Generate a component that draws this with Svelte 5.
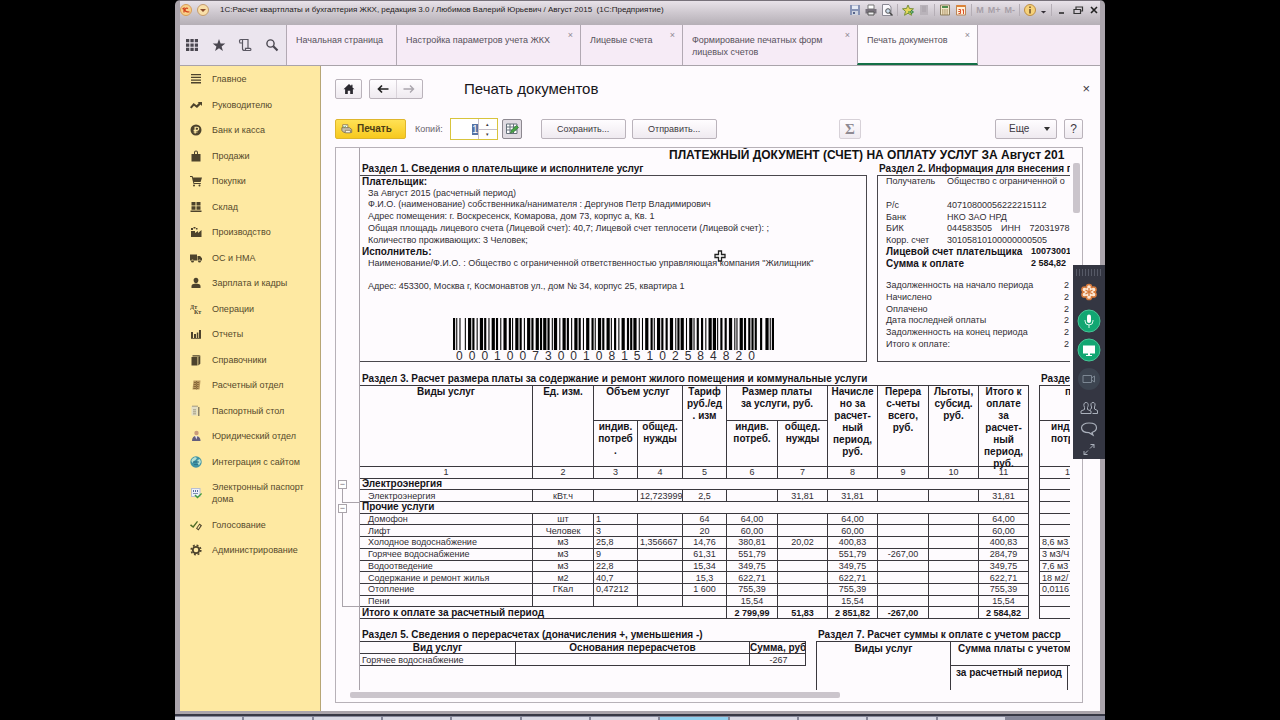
<script>
  import { onMount } from "svelte";

  let copies = "1";
  let copiesInput;

  onMount(() => {
    copiesInput.focus();
    copiesInput.select();
  });

  const tabs = [
    { title: "Начальная страница", kind: "home" },
    { title: "Настройка параметров учета ЖКХ", kind: "params", close: true },
    { title: "Лицевые счета", kind: "accounts", close: true },
    { title: "Формирование печатных форм лицевых счетов", kind: "forms", close: true },
    { title: "Печать документов", kind: "documents", close: true, active: true },
  ];

  const dark = "#4d432c";
  const sections = [
    { title: "Главное", paths: [[dark, "M1 1h10v1.3H1zM1 3.7h10V5H1zM1 6.4h10v1.3H1zM1 9.1h10v1.3H1z"]] },
    { title: "Руководителю", paths: [[dark, "M0 8.3 3.6 4l3 2.2L8.8 4 7.6 3H12v4L10.600 5.600 7 9 4 6.800 1.500 9.600z"]] },
    { title: "Банк и касса", paths: [[dark, "M6 .5a5.500 5.500 0 1 0 0 11 5.500 5.500 0 0 0 0-11zM4.500 2.700h2.700a2 2 0 0 1 0 4.200H5.800v.7h1.700v.9H5.800v1H4.500v-1h-.9v-.9h.9V6.900h-.9V5.800h.9zm1.300 1.100v2h1.300a1 1 0 0 0 0-2z"]] },
    { title: "Продажи", paths: [[dark, "M1.500 4H4V2.500a2 2 0 0 1 4 0V4h2.500v7.500h-9zM5 4h2V2.600a1 1 0 0 0-2 0z"]] },
    { title: "Покупки", paths: [[dark, "M0 1h2.500l.5 1.500h9L10.600 7H4l.3 1h6.500v1H3.500L1.800 2H0zM4 9.500a1 1 0 1 1 0 2 1 1 0 0 1 0-2zM9.500 9.500a1 1 0 1 1 0 2 1 1 0 0 1 0-2z"]] },
    { title: "Склад", paths: [[dark, "M1.500 1h4v3.500h-4zM6.500 1h4v3.500h-4zM1.500 5.300h4v3.500h-4zM6.500 5.300h4v3.500h-4zM.5 9.600h11V11H.5z"]] },
    { title: "Производство", paths: [[dark, "M1 11V5h4v2l3-2v2l3.500-3v7zM1 2h2v2H1zM3.500 1h2v1.500h-2zM6 2h1.500v1.500H6z"]] },
    { title: "ОС и НМА", paths: [[dark, "M0 2.500h7V8.500H0zM7.500 4h2.600L12 6.200v2.300H7.500zM2.500 7.500a1.500 1.500 0 1 1 0 3 1.500 1.500 0 0 1 0-3zM9.500 7.500a1.500 1.500 0 1 1 0 3 1.500 1.500 0 0 1 0-3z"]] },
    { title: "Зарплата и кадры", paths: [[dark, "M6 .8c1.600 0 2.400 1.100 2.400 2.500C8.400 4.800 7.500 6.200 6 6.200S3.600 4.800 3.600 3.300C3.600 1.900 4.400.8 6 .8zM1.500 11V9c0-1.500 2-2.200 3-2.200h3c1 0 3 .7 3 2.200v2z"]] },
    { title: "Операции", letters: true },
    { title: "Отчеты", paths: [[dark, "M1 4h2v6H1zM4 6h2v4H4zM6.800 4.500h1.500V10H6.800zM9 2h2v8H9zM1 10.300h10v.8H1z"]] },
    { title: "Справочники", paths: [[dark, "M1.500 3h6v8.500h-6zM2.500 1.300h8L8.500 2.500h-6zM8.300 3l2-1.200v8l-2 1.700z"]] },
    { title: "Расчетный отдел", paths: [["#b9975e", "M3.500 1.500h7L9.500 10.500h-7z"], ["#77592e", "M4 3h5v.8H4zM3.800 5h5v.8h-5zM3.600 7h5v.8h-5zM3.400 9h5v.8h-5zM6 2h.7v8.500H6z"]] },
    { title: "Паспортный стол", paths: [["#e3dfc6", "M1.500 1h6v9.500h-6z"], ["#8b8268", "M8 2h1.500v9H8zM3 4.500h3v.7H3zM3 6.500h3v.7H3zM3 8.500h3v.7H3zM2 .8h6v.6H2z"]] },
    { title: "Юридический отдел", paths: [["#c99b7b", "M6.500.8a2.200 2.200 0 1 1 0 4.400 2.200 2.200 0 0 1 0-4.400z"], ["#625d7d", "M2 11c0-3.500 1.500-5 4-5s4.500 1.500 4.500 5z"], ["#e5dfec", "M5 6h2.500L6.400 9.500z"]] },
    { title: "Интеграция с сайтом", paths: [["#3f93a5", "M6 .3a5.700 5.700 0 1 0 0 11.400A5.700 5.700 0 0 0 6 .3z"], ["#b4dfd2", "M2 3l3-2 2 1-1.500 2L4 5 2.500 7 1.300 5zM7.500 4l2.500-1 1 3-2 3.500L7.500 7z"], ["#286c84", "M3 5.500h6v1H3zM4 8h4v.8H4z"]] },
    { title: "Электронный паспорт дома", paths: [["#b9bfd2", "M1 1h9.500v9H1z"], ["#edf1fa", "M2 2h7.500v7H2z"], ["#5b6f9e", "M3 3h1v2H3zM5 3h1v2H5zM7 3h1v2H7zM3 6h5v.8H3z"], ["#3f9a3d", "M4.500 8.500l1-1 2 2L11.200 6l.8 1-4.500 4.500z"]] },
    { title: "Голосование", paths: [["#4d6b25", "M0 6.500l1-1.200 2 1.700 4-5 1 .8L3.300 9z"], ["#4d432c", "M6 9.500l3.500-5 2.500 2-3.500 5zM7.300 9.300l1 .8 2.200-3.300-1-.8z"]] },
    { title: "Администрирование", gear: true },
  ];

  const services = [
    { group: "Электроэнергия" },
    { cells: ["Электроэнергия", "кВт.ч", "", "12,723999", "2,5", "", "31,81", "31,81", "", "", "31,81"] },
    { group: "Прочие услуги" },
    { cells: ["Домофон", "шт", "1", "", "64", "64,00", "", "64,00", "", "", "64,00"] },
    { cells: ["Лифт", "Человек", "3", "", "20", "60,00", "", "60,00", "", "", "60,00"] },
    { cells: ["Холодное водоснабжение", "м3", "25,8", "1,356667", "14,76", "380,81", "20,02", "400,83", "", "", "400,83"] },
    { cells: ["Горячее водоснабжение", "м3", "9", "", "61,31", "551,79", "", "551,79", "-267,00", "", "284,79"] },
    { cells: ["Водоотведение", "м3", "22,8", "", "15,34", "349,75", "", "349,75", "", "", "349,75"] },
    { cells: ["Содержание и ремонт жилья", "м2", "40,7", "", "15,3", "622,71", "", "622,71", "", "", "622,71"] },
    { cells: ["Отопление", "ГКал", "0,47212", "", "1 600", "755,39", "", "755,39", "", "", "755,39"] },
    { cells: ["Пени", "", "", "", "", "15,54", "", "15,54", "", "", "15,54"] },
  ];

  const norms = ["", "", "", "", "", "8,6 м3", "3 м3/Ч", "7,6 м3", "18 м2/", "0,0116", "", ""];

  const debts = [
    "Задолженность на начало периода",
    "Начислено",
    "Оплачено",
    "Дата последней оплаты",
    "Задолженность на конец периода",
    "Итого к оплате:",
  ];

  // Code 128, set B: widths of bars and spaces for each digit
  const digitPatterns = [
    "123122", "123221", "223211", "221132", "221231",
    "213212", "223112", "312131", "311222", "321122",
  ];
  const receiptCode = "000100730010815102584820";

  function barcodeBars(code) {
    const widths = "211214" + [...code].map((d) => digitPatterns[d]).join("") + "212123" + "2331112";
    const bars = [];
    let x = 0;
    [...widths].forEach((w, i) => {
      if (i % 2 === 0) bars.push({ x, width: Number(w) });
      x += Number(w);
    });
    return bars;
  }

  const bars = barcodeBars(receiptCode);
</script>

<div class="desktop">
  <div class="window">
    <header class="titlebar">
      <svg class="round-icon" viewBox="0 0 12 12">
        <circle cx="6" cy="6" r="5.500" fill="#f8d089" stroke="#d79c58" />
        <path d="M2.500 5 4 4v4.500M8 4.500C6.500 3.500 5 4.500 5 6s1.500 2 4.500 2" fill="none" stroke="#d1401c" stroke-width="1.200" />
      </svg>
      <svg class="round-icon" viewBox="0 0 12 12">
        <circle cx="6" cy="6" r="5.500" fill="#f9dfa8" stroke="#c39a6d" />
        <path d="M3 5h6L6 8z" fill="#8a4b2c" />
      </svg>
      <span class="app-title">1С:Расчет квартплаты и бухгалтерия ЖКХ, редакция 3.0 / Любимов Валерий Юрьевич / Август 2015&nbsp; (1С:Предприятие)</span>
      <div class="title-tools">
        <svg viewBox="0 0 12 12"><path d="M1 1h10v10H1z" fill="#8793b5" /><path d="M3 1.500h6V5H3z" fill="#e6ebf5" /><path d="M3 7h6v4H3z" fill="#cfd4df" /><path d="M4 8h2v2H4z" fill="#58648a" /></svg>
        <svg viewBox="0 0 12 12"><path d="M3 1h6v4H3z" fill="#fff" stroke="#777" /><path d="M.5 5h11v4.500H.5z" fill="#77717b" /><path d="M3 8h6v3H3z" fill="#eee" stroke="#555" /></svg>
        <svg viewBox="0 0 12 12"><path d="M1.500.5H8L10 3v8.500H1.500z" fill="#faf8fc" stroke="#8b8994" /><circle cx="7" cy="7" r="2.300" fill="#cde" stroke="#555" /><path d="m8.500 8.500 3 3" stroke="#444" stroke-width="1.500" /></svg>
        <i></i>
        <svg viewBox="0 0 12 12"><path d="m6 1 1.500 3.500 4 .3-3 2.500 1 4L6 9.200l-3.500 2.100 1-4-3-2.500 4-.3z" fill="#e5d75a" stroke="#79913c" /><path d="M6 8h5M9 6l2.500 2L9 10" stroke="#2d8b3d" fill="none" /></svg>
        <svg viewBox="0 0 12 12"><path d="M2 1h8v10H2z" fill="#b9b3ba" /><path d="M4 3h4M4 5h4M4 7h4" stroke="#a7a0a8" /></svg>
        <i></i>
        <svg viewBox="0 0 12 12"><path d="M1.500 1h9v10h-9z" fill="#f2e7c8" stroke="#8c7f5e" /><path d="M3 3h6" stroke="#4e8c4c" stroke-width="2" /><path d="M3 6h6M3 8h6M3 10h6" stroke="#99794b" stroke-dasharray="1.500 .7" /></svg>
        <svg viewBox="0 0 12 12"><path d="M1.500 1.500h9v9.500h-9z" fill="#fff0d9" stroke="#b98759" /><path d="M1.500 2h9" stroke="#db8238" stroke-width="2" /><path d="M3.500 5.500h2v2h-2 2v2h-2M7 6l1.500-.5v4.500" stroke="#dc4e27" fill="none" /></svg>
        <i></i>
        <span class="memory">M</span>
        <span class="memory">M+</span>
        <span class="memory">M-</span>
        <i></i>
        <svg viewBox="0 0 12 12"><circle cx="6" cy="6" r="5.500" fill="#f6d27a" stroke="#bd8d44" /><path d="M6 2.500v1.500M6 5v4.500" stroke="#6d4f2b" stroke-width="1.500" /></svg>
        <svg class="small" viewBox="0 0 8 12"><path d="M1 7h6L4 10z" fill="#332f36" /></svg>
        <i></i>
        <svg viewBox="0 0 12 12"><path d="M3 9h5" stroke="#222" stroke-width="1.500" /></svg>
        <svg viewBox="0 0 12 12"><path d="M4 5V3h6.500v4H8.500M2 5.500h6.500V9.500H2z" fill="none" stroke="#333" stroke-width="1.200" /></svg>
        <svg viewBox="0 0 12 12"><path d="m3 3 6 6M9 3 3 9" stroke="#222" stroke-width="1.600" /></svg>
      </div>
    </header>

    <nav class="tabs">
      <div class="quick">
        <svg viewBox="0 0 14 14"><path d="M1 1h3.300v3.300H1zM5.400 1h3.300v3.300H5.400zM9.800 1H13v3.300H9.800zM1 5.400h3.300v3.300H1zM5.400 5.400h3.300v3.300H5.400zM9.800 5.400H13v3.300H9.800zM1 9.800h3.300V13H1zM5.400 9.800h3.300V13H5.400zM9.800 9.800H13V13H9.800z" fill="#4a4750" /></svg>
        <svg viewBox="0 0 14 14"><path d="m7 1 1.600 4.400 4.700.1-3.700 2.900 1.300 4.500L7 10.300l-3.900 2.600 1.300-4.500L.7 5.500l4.700-.1z" fill="#4a4750" /></svg>
        <svg viewBox="0 0 14 14"><path d="M4.500 5H2C1 3 1.500 1.500 3 1.500h7V10M4.500 2v8.500c0 1.500 1 2 2 2h5.500c1.200 0 1.200-2.200 0-2.200H7.500c.3 1.200-.3 2.200-1.200 2.200" fill="none" stroke="#5a5762" stroke-width="1.200" /></svg>
        <svg viewBox="0 0 14 14"><circle cx="5.500" cy="5.500" r="3.600" fill="none" stroke="#4a4750" stroke-width="1.400" /><path d="m8.300 8.300 4.200 4.200" stroke="#4a4750" stroke-width="2.200" /></svg>
      </div>
      {#each tabs as tab}
        <a href="#{tab.kind}" class="tab {tab.kind}" class:active={tab.active}>
          <span>{tab.title}</span>
          {#if tab.close}<b>×</b>{/if}
        </a>
      {/each}
    </nav>

    <div class="body">
      <aside class="sidebar">
        {#each sections as section}
          <a href="#section">
            <svg viewBox="0 0 12 12">
              {#if section.letters}
                <text x="0" y="6" class="dtkt">Дт</text>
                <text x="4" y="11" class="dtkt">Кт</text>
              {:else if section.gear}
                <circle cx="6" cy="6" r="3.200" fill="none" stroke={dark} stroke-width="1.800" />
                <circle cx="6" cy="6" r="4.800" fill="none" stroke={dark} stroke-width="1.600" stroke-dasharray="1.900 1.870" />
              {:else}
                {#each section.paths as [fill, d]}
                  <path {fill} {d} fill-rule="evenodd" />
                {/each}
              {/if}
            </svg>
            <span>{section.title}</span>
          </a>
        {/each}
      </aside>

      <main>
        <div class="heading">
          <button class="btn icon" aria-label="Домой">
            <svg viewBox="0 0 12 12"><path d="M6 1 .5 6.300h1.600V11h2.700V7.700h2.400V11h2.700V6.300h1.600L9.500 4.400V1.800H8.200v1.300z" fill="#2b2930" /></svg>
          </button>
          <div class="history">
            <button aria-label="Назад"><svg viewBox="0 0 12 12"><path d="M11.500 6H2M5 2.500 1.500 6 5 9.500" fill="none" stroke="#222" stroke-width="1.700" /></svg></button>
            <button aria-label="Вперед"><svg viewBox="0 0 12 12"><path d="M.5 6H10M7 2.500 10.500 6 7 9.500" fill="none" stroke="#aaa5ad" stroke-width="1.400" /></svg></button>
          </div>
          <h1>Печать документов</h1>
          <button class="close" aria-label="Закрыть">×</button>
        </div>

        <div class="toolbar">
          <button class="print">
            <svg viewBox="0 0 14 12"><path d="M2 1h6v4H2z" fill="#fff" stroke="#8d7a4c" /><path d="M1 4.500h9l2.500 2V10H3.500L1 8z" fill="#c9c1ae" stroke="#7d7255" /><path d="M5 7.500h6v3H5z" fill="#f7f3e6" stroke="#857a5c" /><path d="m3 3 1 1 2-2" fill="none" stroke="#3f8f37" /></svg>
            Печать
          </button>
          <label for="copies">Копий:</label>
          <div class="copies">
            <input id="copies" type="text" bind:value={copies} bind:this={copiesInput} />
            <div class="spin">
              <button aria-label="Больше" on:click={() => (copies = String(Number(copies) + 1))}>▴</button>
              <button aria-label="Меньше" on:click={() => (copies = String(Math.max(1, copies - 1)))}>▾</button>
            </div>
          </div>
          <button class="btn edit" aria-label="Редактирование">
            <svg viewBox="0 0 14 14"><path d="M1.500 2h10.500v9.500H1.500z" fill="#fff" stroke="#65707a" /><path d="M1.500 5h10.500M1.500 8h10.500M5 2v9.500M8.500 2v9.500" stroke="#65707a" /><path d="m5.500 11 1-3 5-4.500 2 2-5 4.500z" fill="#48a545" stroke="#2d7434" stroke-width=".7" /></svg>
          </button>
          <button class="btn wide">Сохранить...</button>
          <button class="btn wide">Отправить...</button>
          <button class="btn sigma" disabled>Σ</button>
          <button class="btn more">Еще <svg viewBox="0 0 8 6"><path d="M1 1h6L4 5z" fill="#333" /></svg></button>
          <button class="btn help">?</button>
        </div>

        <div class="document">
          <div class="gutter">
            <button aria-label="Свернуть группу">−</button>
            <div class="branch"></div>
            <button aria-label="Свернуть группу">−</button>
            <div class="branch long"></div>
          </div>

          <div class="sheet">
            <h2>ПЛАТЕЖНЫЙ ДОКУМЕНТ (СЧЕТ) НА ОПЛАТУ УСЛУГ ЗА Август 201</h2>
            <div class="panels">
              <section class="payer">
                <h3>Раздел 1. Сведения о плательщике и исполнителе услуг</h3>
                <div class="box">
                  <div class="lines">
                    <strong>Плательщик:</strong>
                    <p>За Август 2015 (расчетный период)</p>
                    <p>Ф.И.О. (наименование) собственника/нанимателя : Дергунов Петр Владимирович</p>
                    <p>Адрес помещения: г. Воскресенск, Комарова, дом 73, корпус а, Кв. 1</p>
                    <p>Общая площадь лицевого счета (Лицевой счет): 40,7; Лицевой счет теплосети (Лицевой счет): ;</p>
                    <p>Количество проживающих: 3 Человек;</p>
                    <strong>Исполнитель:</strong>
                    <p>Наименование/Ф.И.О. : Общество с ограниченной ответственностью управляющая компания "Жилищник"</p>
                  </div>
                  <p class="address">Адрес: 453300, Москва г, Космонавтов ул., дом № 34, корпус 25, квартира 1</p>
                  <div class="barcode">
                    <svg viewBox="0 0 299 32" preserveAspectRatio="none">
                      {#each bars as bar}
                        <rect x={bar.x} y="0" width={bar.width} height="32" />
                      {/each}
                    </svg>
                    <div class="digits">
                      {#each receiptCode as digit}<span>{digit}</span>{/each}
                    </div>
                  </div>
                </div>
              </section>

              <section class="payee">
                <h3>Раздел 2. Информация для внесения п</h3>
                <div class="box">
                  <dl>
                    <dt>Получатель</dt><dd>Общество с ограниченной о</dd>
                    <dt class="gap">Р/с</dt><dd class="gap">40710800056222215112</dd>
                    <dt>Банк</dt><dd>НКО ЗАО НРД</dd>
                    <dt>БИК</dt><dd class="bik"><span>044583505</span><span>ИНН</span><span>72031978</span></dd>
                    <dt>Корр. счет</dt><dd>30105810100000000505</dd>
                  </dl>
                  <dl class="sums">
                    <dt>Лицевой счет плательщика</dt><dd>10073001</dd>
                    <dt>Сумма к оплате</dt><dd>2 584,82</dd>
                  </dl>
                  <dl class="debts">
                    {#each debts as debt}
                      <dt>{debt}</dt><dd>2</dd>
                    {/each}
                  </dl>
                </div>
              </section>
            </div>

            <div class="charges">
              <section>
                <h3>Раздел 3. Расчет размера платы за содержание и ремонт жилого помещения и коммунальные услуги</h3>
                <table class="services">
                  <colgroup>
                    <col class="name" /><col class="unit" /><col class="c44" /><col class="c45" /><col class="c44" /><col class="c51" />
                    <col class="c50" /><col class="c50" /><col class="c51" /><col class="c50" /><col class="c50" />
                  </colgroup>
                  <thead>
                    <tr class="head">
                      <th rowspan="2"><div>Виды услуг</div></th>
                      <th rowspan="2"><div>Ед. изм.</div></th>
                      <th colspan="2"><div>Объем услуг</div></th>
                      <th rowspan="2"><div>Тариф<br />руб./ед<br />. изм</div></th>
                      <th colspan="2"><div>Размер платы<br />за услуги, руб.</div></th>
                      <th rowspan="2"><div>Начисле<br />но за<br />расчет-<br />ный<br />период,<br />руб.</div></th>
                      <th rowspan="2"><div>Перера<br />с-четы<br />всего,<br />руб.</div></th>
                      <th rowspan="2"><div>Льготы,<br />субсид.<br />руб.</div></th>
                      <th rowspan="2"><div>Итого к<br />оплате<br />за<br />расчет-<br />ный<br />период,<br />руб.</div></th>
                    </tr>
                    <tr class="subhead">
                      <th><div>индив.<br />потреб<br />.</div></th>
                      <th><div>общед.<br />нужды</div></th>
                      <th><div>индив.<br />потреб.</div></th>
                      <th><div>общед.<br />нужды</div></th>
                    </tr>
                  </thead>
                  <tbody>
                    <tr class="numbers">
                      {#each Array(11) as _, i}<td>{i + 1}</td>{/each}
                    </tr>
                    {#each services as row}
                      <tr>
                        {#if row.group}
                          <th colspan="11" class="group">{row.group}</th>
                        {:else}
                          {#each row.cells as cell}<td>{cell}</td>{/each}
                        {/if}
                      </tr>
                    {/each}
                    <tr class="total">
                      <th colspan="5" class="group">Итого к оплате за расчетный период</th>
                      <td>2 799,99</td><td>51,83</td><td>2 851,82</td><td>-267,00</td><td></td><td>2 584,82</td>
                    </tr>
                  </tbody>
                </table>
              </section>
              <section>
                <h3>Разде</h3>
                <table class="norms">
                  <thead>
                    <tr class="head"><th><div class="shift">п</div></th></tr>
                    <tr class="subhead"><th><div>инд<br />потр</div></th></tr>
                  </thead>
                  <tbody>
                    <tr><td class="shift">1</td></tr>
                    {#each norms as norm}<tr><td>{norm}</td></tr>{/each}
                  </tbody>
                </table>
              </section>
            </div>

            <div class="recalc">
              <section>
                <h3>Раздел 5. Сведения о перерасчетах (доначисления +, уменьшения -)</h3>
                <table>
                  <colgroup><col class="kind" /><col class="reason" /><col class="amount" /></colgroup>
                  <thead><tr><th>Вид услуг</th><th>Основания перерасчетов</th><th>Сумма, руб</th></tr></thead>
                  <tbody><tr><td>Горячее водоснабжение</td><td></td><td class="mid">-267</td></tr></tbody>
                </table>
              </section>
              <section class="instalments">
                <h3>Раздел 7. Расчет суммы к оплате с учетом расср</h3>
                <table>
                  <colgroup><col class="type" /><col class="period" /><col /></colgroup>
                  <thead>
                    <tr class="top"><th rowspan="2">Виды услуг</th><th colspan="2" class="left">Сумма платы с учетом</th></tr>
                    <tr class="low"><th>за расчетный период</th><th></th></tr>
                  </thead>
                </table>
              </section>
            </div>
          </div>

          <div class="vscroll"><div></div></div>
          <div class="hscroll"><div></div></div>

          <svg class="pointer" viewBox="0 0 12 12"><path d="M4.500 1h3v3.500H11v3H7.500V11h-3V7.500H1v-3h3.500z" fill="#fff" stroke="#222" stroke-width="1.300" /></svg>
        </div>
      </main>
    </div>

    <div class="meeting">
      <div class="grip"></div>
      <svg viewBox="0 0 24 24"><g fill="#fbe6d2" stroke="#d5793b" stroke-width="1.500"><circle cx="12" cy="7" r="2.600" /><circle cx="16.500" cy="9.500" r="2.600" /><circle cx="16.500" cy="14.500" r="2.600" /><circle cx="12" cy="17" r="2.600" /><circle cx="7.500" cy="14.500" r="2.600" /><circle cx="7.500" cy="9.500" r="2.600" /></g><circle cx="12" cy="12" r="4.500" fill="#fbe6d2" /><path d="M12 8v8M8.500 10l7 4M15.500 10l-7 4" stroke="#d5793b" stroke-width="1.300" /></svg>
      <svg viewBox="0 0 24 24"><circle cx="12" cy="12" r="11" fill="#12a672" stroke="#48c596" /><rect x="10" y="5.500" width="4" height="8.500" rx="2" fill="#fff" /><path d="M8 11v1a4 4 0 0 0 8 0v-1M12 16v3" fill="none" stroke="#d8f5e9" /></svg>
      <svg viewBox="0 0 24 24"><circle cx="12" cy="12" r="11" fill="#12a672" stroke="#48c596" /><path d="M6 7.500h12v8H6zM11 15.500h2V17h2v1H9v-1h2z" fill="#fff" /></svg>
      <svg viewBox="0 0 24 24"><circle cx="12" cy="12" r="11" fill="#3d4551" /><path d="M6 8.500h8.500v7H6zM14.500 11l3-2v6l-3-2" fill="none" stroke="#7c8793" /></svg>
      <svg viewBox="0 0 24 24"><path d="M4 17.500v-2.500l3.500-1.500V11.500c-1.300-3-.5-5 1.500-5s3 2 1.500 5v2l3.500 1.500v2.500zM13 13.500l1.500-1v-1.500c-1.300-3-.3-4.500 1.500-4.500s2.800 1.500 1.500 4.500v2l3 1.500v3h-5" fill="none" stroke="#aab0bb" /></svg>
      <svg viewBox="0 0 24 24"><path d="M15 15.500c3-1 4.500-2.500 4.500-4.700C19.500 7.500 16 6 12 6s-7.500 1.500-7.500 4.800S8 15.700 12 15.700l4 2.300z" fill="none" stroke="#aab0bb" stroke-width="1.200" /></svg>
      <svg viewBox="0 0 24 24"><path d="M13 10.500 17 6.500M13.500 6.500H17V10M11 12.500 7 16.500M10.500 16.500H7V13" fill="none" stroke="#aab0bb" /></svg>
    </div>
  </div>
  <footer class="taskbar">
    {#each Array(12) as _, i}<span class:bright={i === 7}></span>{/each}
  </footer>
</div>

<style>
  :global(body) {
    background: #000;
  }

  .desktop {
    display: flex;
    flex-direction: column;
    height: 100vh;
    padding: 0 175px;
    box-sizing: border-box;
    overflow: hidden;
    font-family: "Liberation Sans", Arial, sans-serif;
    font-size: 10px;
    line-height: 12px;
    color: #3c3840;
  }

  .window {
    position: relative;
    display: flex;
    flex-direction: column;
    flex: 1;
    min-height: 0;
    border: 5px solid #aaa4ab;
    border-top: 1px solid #77717a;
    border-bottom: 3px solid #aaa4ab;
    border-radius: 5px 5px 0 0;
    background: #fefbfe;
  }

  button {
    font-family: inherit;
    font-size: 10px;
    line-height: 12px;
    color: inherit;
    padding: 0;
  }

  a {
    color: inherit;
    text-decoration: none;
  }

  h1,
  h2,
  h3,
  p,
  dl,
  dd {
    margin: 0;
  }

  .titlebar {
    display: flex;
    align-items: center;
    gap: 5px;
    height: 24px;
    padding-bottom: 6px;
    box-sizing: border-box;
    background: linear-gradient(#e8e2e9, #cbc5cc 55%, #b5afb6);
    color: #1e1b21;
    flex: none;
  }

  .round-icon {
    width: 12px;
    height: 12px;
    flex: none;
  }

  .app-title {
    margin-left: 6px;
    font-size: 8px;
    white-space: nowrap;
  }

  .title-tools {
    display: flex;
    align-items: center;
    gap: 4px;
    margin-left: auto;
  }

  .title-tools svg {
    width: 12px;
    height: 12px;
  }

  .title-tools .small {
    width: 7px;
  }

  .title-tools i {
    width: 1px;
    height: 12px;
    background: #b5aeb6;
  }

  .memory {
    font-size: 9px;
    font-weight: bold;
    color: #a79fa8;
  }

  .tabs {
    display: flex;
    flex: none;
    height: 40px;
    background: #f6ebf6;
    border-bottom: 1px solid #a9a3aa;
  }

  .quick {
    display: flex;
    align-items: center;
    justify-content: space-between;
    width: 106px;
    padding: 0 7px 0 5px;
    box-sizing: border-box;
    background: #ebe5ee;
  }

  .quick svg {
    width: 14px;
    height: 14px;
  }

  .tab {
    display: flex;
    justify-content: space-between;
    box-sizing: border-box;
    padding: 9px 7px 0 9px;
    border-left: 1px solid #b2a9b3;
    font-size: 9px;
    color: #57515b;
  }

  .tab b {
    margin-top: -5px;
    font-weight: normal;
    color: #8f8892;
  }

  .tab.home {
    width: 110px;
  }

  .tab.params {
    width: 184px;
  }

  .tab.accounts {
    width: 102px;
  }

  .tab.forms {
    width: 175px;
  }

  .tab.documents {
    width: 121px;
  }

  .tab.active {
    background: #fefbfe;
    border-right: 1px solid #b2a9b3;
    border-bottom: 2px solid #147047;
  }

  .body {
    display: flex;
    flex: 1;
    min-height: 0;
  }

  .sidebar {
    display: flex;
    flex-direction: column;
    justify-content: space-between;
    width: 141px;
    padding: 7px 10px 155px;
    box-sizing: border-box;
    background: #fee9a2;
    border-right: 1px solid #b7a676;
    font-size: 9px;
    color: #564a2c;
  }

  .sidebar a {
    display: flex;
    align-items: center;
    gap: 10px;
  }

  .sidebar svg {
    width: 12px;
    height: 12px;
    flex: none;
  }

  .dtkt {
    font-family: "Liberation Serif", serif;
    font-size: 6px;
    font-weight: bold;
    fill: #4d432c;
  }

  main {
    display: flex;
    flex-direction: column;
    flex: 1;
    min-width: 0;
    padding: 13px 17px 8px 14px;
  }

  .heading {
    display: flex;
    align-items: center;
    height: 20px;
    flex: none;
  }

  .btn,
  .history {
    height: 20px;
    box-sizing: border-box;
    border: 1px solid #bab3bb;
    border-radius: 2px;
    background: linear-gradient(#fffdff, #efeaf0);
  }

  .btn.icon {
    width: 27px;
  }

  .btn svg,
  .history svg {
    width: 12px;
    height: 12px;
    display: block;
    margin: auto;
  }

  .history {
    display: flex;
    width: 54px;
    margin-left: 7px;
  }

  .history button {
    flex: 1;
    border: none;
    background: none;
  }

  .history button + button {
    border-left: 1px solid #d9d3da;
  }

  h1 {
    margin-left: 41px;
    font-size: 15px;
    line-height: 20px;
    font-weight: normal;
    color: #17151a;
  }

  .close {
    margin-left: auto;
    margin-right: -7px;
    border: none;
    background: none;
    font-size: 13px;
  }

  .toolbar {
    display: flex;
    align-items: center;
    height: 22px;
    margin: 19px 0 7px;
    flex: none;
  }

  .print {
    display: flex;
    align-items: center;
    gap: 4px;
    width: 71px;
    height: 20px;
    padding-left: 5px;
    border: 1px solid #dfb62c;
    border-radius: 2px;
    background: linear-gradient(#ffe155, #f7c91e);
    font-weight: bold;
    color: #4d3e16;
  }

  .print svg {
    width: 12px;
    height: 12px;
  }

  .toolbar label {
    margin: 0 7px 0 9px;
    font-size: 9px;
    color: #6a646d;
  }

  .copies {
    display: flex;
    width: 48px;
    height: 22px;
    box-sizing: border-box;
    border: 1px solid #d8c43c;
    background: #fff;
  }

  .copies input {
    width: 28px;
    box-sizing: border-box;
    padding: 0;
    border: none;
    border-right: 1px solid #c5bfc7;
    outline: none;
    font-family: inherit;
    font-size: 10px;
    text-align: right;
    background: none;
  }

  .copies input::selection {
    background: #5673a5;
    color: #fff;
  }

  .spin {
    display: flex;
    flex-direction: column;
    flex: 1;
  }

  .spin button {
    flex: 1;
    border: none;
    background: none;
    font-size: 5px;
    line-height: 8px;
  }

  .spin button + button {
    border-top: 1px solid #c5bfc7;
  }

  .btn.edit {
    width: 20px;
    margin-left: 4px;
    border-color: #8d8890;
    background: #e0dbe2;
  }

  .btn.edit svg {
    width: 14px;
    height: 14px;
  }

  .btn.wide {
    width: 85px;
    margin-left: 19px;
    font-size: 9px;
  }

  .btn.wide + .btn.wide {
    margin-left: 6px;
  }

  .btn.sigma {
    width: 22px;
    margin-left: auto;
    font-family: "Liberation Serif", serif;
    font-size: 15px;
    font-weight: bold;
    color: #8f8a92;
    border-color: #d7d1d8;
  }

  .btn.more {
    display: flex;
    align-items: center;
    width: 62px;
    margin-left: 134px;
    padding-left: 13px;
  }

  .btn.more svg {
    width: 8px;
    height: 6px;
    margin-right: 5px;
  }

  .btn.help {
    width: 19px;
    margin-left: 7px;
    font-size: 12px;
  }

  .document {
    position: relative;
    display: grid;
    grid-template-columns: 24px 1fr 12px;
    grid-template-rows: 1fr 12px;
    flex: 1;
    min-height: 0;
    border: 1px solid #b7b1b8;
  }

  .gutter {
    border-right: 1px solid #a9a3aa;
    padding-top: 332px;
    overflow: hidden;
  }

  .gutter button {
    display: block;
    width: 9px;
    height: 9px;
    margin-left: 2px;
    border: 1px solid #aaa4ab;
    background: #fff;
    font-size: 9px;
    line-height: 5px;
    color: #77717a;
  }

  .branch {
    height: 13px;
    margin: 0 0 1px 6px;
    border-left: 1px solid #aaa4ab;
    border-bottom: 1px solid #aaa4ab;
  }

  .branch.long {
    height: 93px;
  }

  .sheet {
    overflow: hidden;
    font-size: 9px;
    color: #302d33;
    white-space: nowrap;
  }

  .sheet h2 {
    padding-left: 309px;
    font-size: 12px;
    line-height: 15px;
    color: #111;
  }

  .sheet h3 {
    padding-left: 2px;
    font-size: 10px;
    line-height: 12px;
    color: #151318;
  }

  .panels,
  .charges,
  .recalc {
    display: flex;
    gap: 10px;
  }

  .payer {
    width: 507px;
    flex: none;
  }

  .payee {
    flex: 1;
    min-width: 0;
  }

  .box {
    height: 187px;
    box-sizing: border-box;
    border: 1px solid #4a474d;
    border-left: none;
  }

  .lines {
    display: flex;
    flex-direction: column;
    justify-content: space-between;
    height: 93px;
    line-height: 11px;
  }

  .box strong {
    padding-left: 2px;
    font-size: 10px;
    color: #151318;
  }

  .box p {
    padding-left: 8px;
  }

  .address {
    margin-top: 11px;
  }

  .barcode {
    width: 321px;
    margin: 26px 0 0 93px;
  }

  .barcode svg {
    display: block;
    width: 100%;
    height: 32px;
  }

  .digits {
    display: flex;
    justify-content: space-between;
    padding: 0 19px 0 3px;
    font-size: 12px;
    line-height: 12px;
  }

  .payee .box {
    border-left: 1px solid #4a474d;
    border-right: none;
    padding-left: 8px;
  }

  .payee dl {
    display: grid;
    grid-template-columns: 61px 1fr;
    align-content: space-between;
    height: 70px;
    line-height: 11px;
  }

  .payee .gap {
    padding-top: 12px;
  }

  .bik {
    display: flex;
    gap: 9px;
  }

  .payee .sums {
    grid-template-columns: 145px 1fr;
    height: 23px;
    font-weight: bold;
    color: #151318;
  }

  .sums dt {
    font-size: 10px;
  }

  .payee .debts {
    grid-template-columns: 178px 1fr;
    margin-top: 11px;
  }

  .charges {
    margin-top: 11px;
  }

  .recalc {
    margin-top: 10px;
  }

  table {
    table-layout: fixed;
    border-collapse: separate;
    border-spacing: 0;
    border-top: 1px solid #3b383e;
    line-height: 10px;
  }

  th,
  td {
    padding: 0;
    border-right: 1px solid #3b383e;
    border-bottom: 1px solid #3b383e;
    overflow: hidden;
    text-align: center;
  }

  th {
    font-size: 10px;
    color: #151318;
  }

  .services {
    width: 669px;
    height: 234px;
  }

  col.name {
    width: 173px;
  }

  col.unit {
    width: 61px;
  }

  col.c44 {
    width: 44px;
  }

  col.c45 {
    width: 45px;
  }

  col.c50 {
    width: 50px;
  }

  col.c51 {
    width: 51px;
  }

  .head,
  .subhead {
    line-height: 12px;
  }

  .head th,
  .subhead th {
    vertical-align: top;
    overflow: visible;
  }

  .head {
    height: 35px;
  }

  .subhead {
    height: 46px;
  }

  .head div,
  .subhead div {
    height: 30px;
  }

  .services th.group {
    text-align: left;
    padding-left: 2px;
  }

  .services td:first-child {
    text-align: left;
    padding-left: 8px;
  }

  .services .numbers td:first-child {
    text-align: center;
    padding: 0;
  }

  .services tbody tr:not(.numbers) td:nth-child(3):not(.total td),
  .services tbody tr:not(.numbers) td:nth-child(4):not(.total td) {
    text-align: left;
    padding-left: 2px;
  }

  .services .total td {
    text-align: center;
    padding: 0;
    font-weight: bold;
    color: #151318;
  }

  .norms {
    width: 60px;
    height: 234px;
    border-left: 1px solid #3b383e;
  }

  .norms td {
    text-align: left;
    padding-left: 2px;
    height: 10px;
  }

  .norms .subhead div {
    text-align: left;
    padding-left: 11px;
  }

  .norms .shift {
    text-align: left;
    padding-left: 25px;
  }

  .recalc section:first-child {
    width: 446px;
    flex: none;
  }

  .recalc table {
    width: 100%;
  }

  .recalc tr {
    height: 12px;
  }

  col.kind {
    width: 156px;
  }

  col.amount {
    width: 56px;
  }

  .recalc td {
    text-align: left;
    padding-left: 2px;
  }

  .recalc td.mid {
    text-align: center;
  }

  .instalments {
    width: 300px;
    flex: none;
  }

  .recalc .instalments table {
    border-left: 1px solid #3b383e;
    line-height: 12px;
  }

  .instalments th {
    vertical-align: top;
    padding-top: 1px;
  }

  .instalments .top {
    height: 24px;
  }

  .instalments .low {
    height: 60px;
  }

  .instalments .left {
    text-align: left;
    padding-left: 7px;
  }

  col.type {
    width: 134px;
  }

  col.period {
    width: 117px;
  }

  .vscroll {
    padding: 15px 2px 0 3px;
  }

  .vscroll div {
    height: 50px;
    border-radius: 2px;
    background: #cbc5cc;
  }

  .hscroll {
    grid-column: 1 / -1;
    padding: 2px 0 0 14px;
  }

  .hscroll div {
    width: 67%;
    height: 6px;
    border-radius: 2px;
    background: #cbc5cc;
  }

  .pointer {
    position: absolute;
    left: 378px;
    top: 102px;
    width: 12px;
    height: 12px;
  }

  .meeting {
    position: absolute;
    right: -5px;
    top: 264px;
    display: flex;
    flex-direction: column;
    align-items: center;
    width: 32px;
    height: 194px;
    background: #343642;
  }

  .meeting svg {
    width: 24px;
    height: 24px;
    margin-bottom: 5px;
    flex: none;
  }

  .meeting svg:nth-child(n + 6) {
    margin-bottom: -3px;
  }

  .grip {
    align-self: stretch;
    height: 7px;
    margin: 4px 3px;
    background: repeating-linear-gradient(90deg, #565966 0 1px, #343642 1px 3px);
  }

  .taskbar {
    display: flex;
    gap: 2px;
    height: 3px;
    flex: none;
    padding-top: 1px;
    padding-right: 100px;
    border-top: 2px solid #373845;
    background: #858799;
  }

  .taskbar span {
    flex: 1;
    background: #d8d9e4;
  }

  .taskbar .bright {
    background: #8fd0ee;
  }
</style>
